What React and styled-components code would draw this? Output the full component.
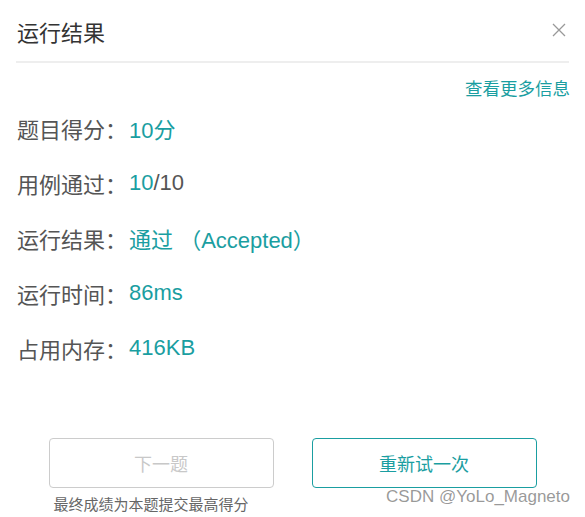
import React from 'react';
import styled, { createGlobalStyle } from 'styled-components';

const GlobalStyle = createGlobalStyle`
  html, body {
    margin: 0;
    padding: 0;
    background: #fff;
  }
  body {
    font-family: "Liberation Sans", "Noto Sans CJK SC", sans-serif;
  }
`;

const TEAL = '#1a9ea1';

const Dialog = styled.div`
  position: relative;
  width: 585px;
  height: 517px;
  box-sizing: border-box;
  padding: 0 16px;
  background: #fff;
  display: flex;
  flex-direction: column;
`;

const Header = styled.div`
  display: flex;
  justify-content: space-between;
  align-items: flex-start;
  padding: 22px 0 15px 1px;
  border-bottom: 2px solid #eeeeee;
`;

const Title = styled.h2`
  margin: 0;
  font-size: 22px;
  line-height: 24px;
  font-weight: normal;
  color: #333;
`;

const CloseButton = styled.button`
  border: none;
  background: none;
  padding: 0;
  margin: 1px 3px 0 0;
  width: 14px;
  height: 14px;
  cursor: pointer;
  display: flex;
`;

const MoreLink = styled.a`
  align-self: flex-end;
  margin-top: 16px;
  margin-right: -1px;
  font-size: 17.5px;
  line-height: 20px;
  color: ${TEAL};
  text-decoration: none;
  cursor: pointer;
`;

const InfoList = styled.div`
  display: flex;
  flex-direction: column;
  margin-top: 1px;
  padding-left: 1px;
`;

const InfoRow = styled.div`
  display: flex;
  align-items: center;
  height: 55px;
  font-size: 22px;
`;

const Label = styled.span`
  color: #555;
  margin-right: 2px;
`;

const Value = styled.span`
  color: ${(p) => (p.$muted ? '#555' : TEAL)};
  white-space: pre;
`;

const Actions = styled.div`
  display: flex;
  justify-content: center;
  gap: 38px;
  margin-top: 63px;
  margin-left: -16px;
  margin-right: -16px;
`;

const ActionColumn = styled.div`
  display: flex;
  flex-direction: column;
  width: 225px;
`;

const Button = styled.button`
  width: 225px;
  height: 50px;
  box-sizing: border-box;
  border-radius: 4px;
  background: #fff;
  font-family: inherit;
  font-size: 18px;
  border: 1px solid ${(p) => (p.$disabled ? '#cccccc' : TEAL)};
  color: ${(p) => (p.$disabled ? '#c8c8c8' : TEAL)};
  cursor: ${(p) => (p.$disabled ? 'not-allowed' : 'pointer')};
`;

const Hint = styled.div`
  margin-top: 7px;
  padding-left: 5px;
  font-size: 15px;
  line-height: 20px;
  color: #666;
`;

const Watermark = styled.div`
  position: absolute;
  right: 15px;
  top: 487px;
  font-size: 17px;
  line-height: 20px;
  color: rgba(120, 120, 120, 0.75);
  pointer-events: none;
`;

const CloseIcon = () => (
  <svg width="14" height="14" viewBox="0 0 14 14">
    <path d="M1 1 L13 13 M13 1 L1 13" stroke="#999" strokeWidth="1.3" fill="none" />
  </svg>
);

const results = [
  { label: '题目得分：', parts: [{ text: '10分' }] },
  { label: '用例通过：', parts: [{ text: '10' }, { text: '/10', muted: true }] },
  { label: '运行结果：', parts: [{ text: '通过 （Accepted）' }] },
  { label: '运行时间：', parts: [{ text: '86ms' }] },
  { label: '占用内存：', parts: [{ text: '416KB' }] },
];

export default function App() {
  return (
    <>
      <GlobalStyle />
      <Dialog>
        <Header>
          <Title>运行结果</Title>
          <CloseButton aria-label="close">
            <CloseIcon />
          </CloseButton>
        </Header>
        <MoreLink>查看更多信息</MoreLink>
        <InfoList>
          {results.map((row) => (
            <InfoRow key={row.label}>
              <Label>{row.label}</Label>
              {row.parts.map((part, i) => (
                <Value key={i} $muted={part.muted}>
                  {part.text}
                </Value>
              ))}
            </InfoRow>
          ))}
        </InfoList>
        <Actions>
          <ActionColumn>
            <Button $disabled>下一题</Button>
            <Hint>最终成绩为本题提交最高得分</Hint>
          </ActionColumn>
          <ActionColumn>
            <Button>重新试一次</Button>
          </ActionColumn>
        </Actions>
        <Watermark>CSDN @YoLo_Magneto</Watermark>
      </Dialog>
    </>
  );
}
